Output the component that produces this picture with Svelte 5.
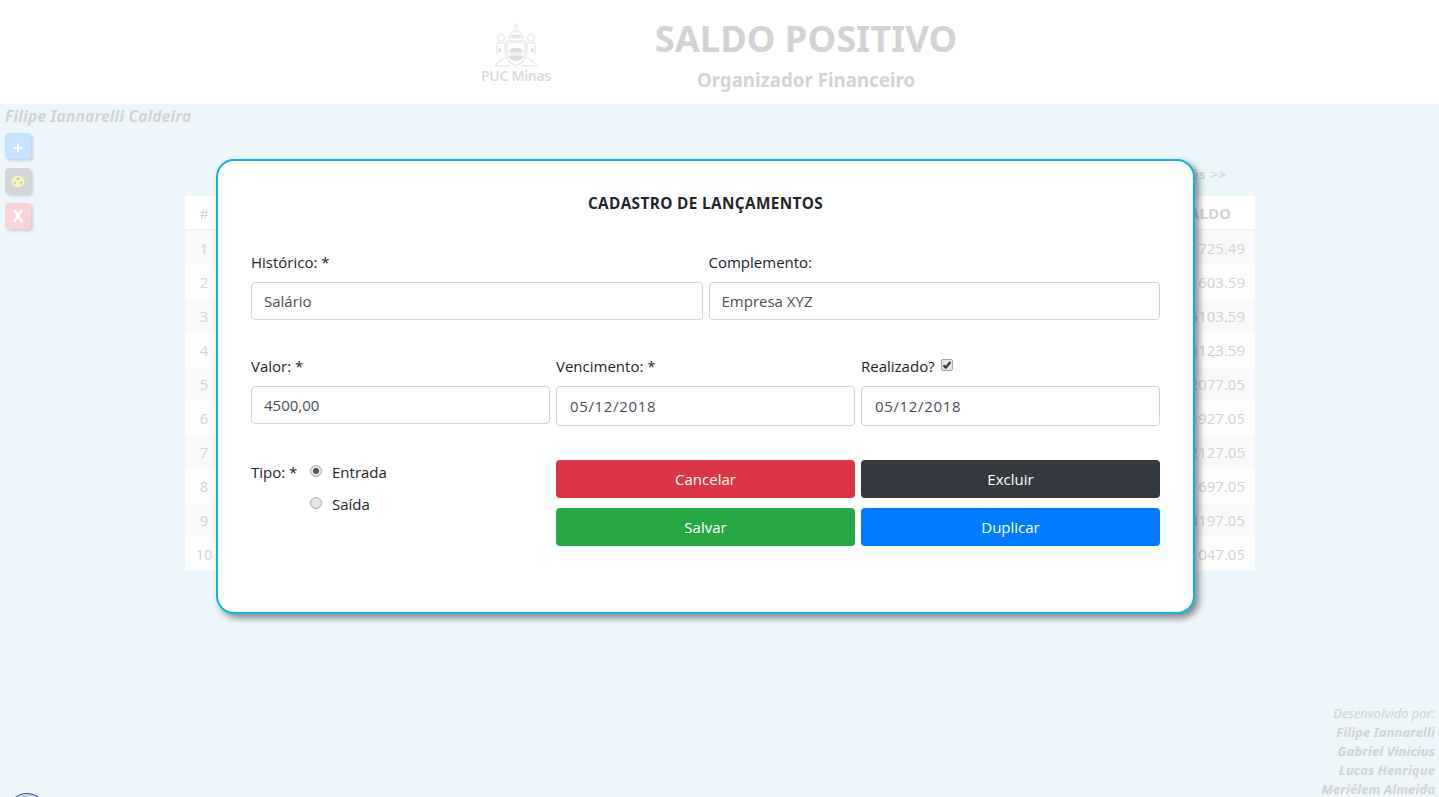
<script lang="ts">
  const balances = ['1725.49', '1603.59', '6103.59', '6123.59', '2077.05', '1927.05', '2127.05', '1697.05', '3197.05', '1047.05'];
  const authors = ['Filipe Iannarelli', 'Gabriel Vinicius', 'Lucas Henrique', 'Meriélem Almeida'];
  let description = $state('Salário');
  let complement = $state('Empresa XYZ');
  let amount = $state('4500,00');
  let due = $state('05/12/2018');
  let paid = $state('05/12/2018');
  let done = $state(true);
  let kind = $state('in');
</script>

<div class="page">
  <header>
    <div class="logo">
      <svg width="46" height="45" viewBox="0 0 46 45" fill="none" stroke="#efefef" stroke-width="2">
        <path d="M23 0v7M20.5 3h5M16 15c0-9 14-9 14 0zM14 18h18M18 10l5-3 5 3" />
        <path d="M18 13h10" stroke="#e2e2e2" stroke-width="2.5" />
        <circle cx="8" cy="15" r="3.5" /><circle cx="38" cy="15" r="3.5" />
        <path d="M3 20h12M31 20h12M4 22v9M12 20v9M34 20v9M42 22v9M12 30c3 3 2 5-2 6-5 2-6 6-8 7h15M34 30c-3 3-2 5 2 6 5 2 6 6 8 7H29" />
        <path d="M14 19v15c0 5 5 6 9 9 4-3 9-4 9-9V19z" />
        <path d="M16 29c2-5 12-5 14 0zM16 33c2 6 12 6 14 0zM18 31h10" fill="#dedede" stroke="#dedede" stroke-width="1" />
        <path d="m6 25.500 2.500 2-2 1.500zM40 25.500l-2.500 2 2 1.500z" fill="#d9d9d9" stroke="#d9d9d9" stroke-width="1" />
      </svg>
      <span>PUC Minas</span>
    </div>
    <div class="titles">
      <h1>SALDO POSITIVO</h1>
      <h2>Organizador Financeiro</h2>
    </div>
  </header>

  <aside>
    <div class="user">Filipe Iannarelli Caldeira</div>
    <button class="tool add" aria-label="+"><svg width="26" height="26"><path d="M13 11v8M9 15h8" stroke="#fff" stroke-width="2" /></svg></button>
    <button class="tool view" aria-label="Ver"><svg width="26" height="26"><ellipse cx="13" cy="13.500" rx="6.500" ry="5.700" fill="#f8f6bd" /><path d="M11 10h4l-2 2.200zM8.500 13.500l2.500 1-1 2.500zM17.500 13.500l-2.500 1 1 2.500z" fill="#b4b4ac" /></svg></button>
    <button class="tool close">X</button>
  </aside>

  <main>
    <div class="next">Mês &gt;&gt;</div>
    <table>
      <thead><tr><th class="num">#</th><th class="total">SALDO</th></tr></thead>
      <tbody>
        {#each balances as balance, i}
          <tr><td class="num">{i + 1}</td><td class="total">{balance}</td></tr>
        {/each}
      </tbody>
    </table>
  </main>

  <footer>
    <div class="by">Desenvolvido por:</div>
    {#each authors as author}<div>{author}</div>{/each}
  </footer>
  <div class="bubble"></div>

  <form class="modal">
    <h3>CADASTRO DE LANÇAMENTOS</h3>
    <div class="row two">
      <label><span class="caption">Histórico: *</span><input bind:value={description} /></label>
      <label><span class="caption">Complemento:</span><input bind:value={complement} /></label>
    </div>
    <div class="row three">
      <label><span class="caption">Valor: *</span><input bind:value={amount} /></label>
      <label><span class="caption">Vencimento: *</span><input class="date" bind:value={due} /></label>
      <div>
        <label class="caption done">Realizado?
          <input type="checkbox" bind:checked={done} />
          <span class="check">{#if done}<svg width="10" height="10"><path d="M1.5 5.2 3.8 7.6 8.4 2" fill="none" stroke="#333" stroke-width="2.2" /></svg>{/if}</span>
        </label>
        <input class="date" bind:value={paid} />
      </div>
    </div>
    <div class="row three last">
      <div class="kind">
        <span class="tipo">Tipo: *</span>
        <div class="options">
          <label><input type="radio" value="in" bind:group={kind} /><span class="dot" class:on={kind === 'in'}></span>Entrada</label>
          <label><input type="radio" value="out" bind:group={kind} /><span class="dot" class:on={kind === 'out'}></span>Saída</label>
        </div>
      </div>
      <div class="actions">
        <button type="button" class="red">Cancelar</button>
        <button type="button" class="green">Salvar</button>
      </div>
      <div class="actions">
        <button type="button" class="dark">Excluir</button>
        <button type="button" class="blue">Duplicar</button>
      </div>
    </div>
  </form>
</div>

<style>
  :global(body) { margin: 0; overflow: hidden; }
  * { box-sizing: border-box; }
  .page { position: relative; height: 797px; overflow: hidden; background: #edf6fa; color: #d3d3d5; font-family: "Noto Sans", sans-serif; font-size: 15px; }
  header { height: 104px; background: #fff; display: flex; padding-left: 476px; }
  .logo { width: 80px; padding-top: 23px; display: flex; flex-direction: column; align-items: center; }
  .logo span { font: 600 14px/16px "Noto Sans", sans-serif; letter-spacing: -0.3px; color: #dcdcdc; white-space: nowrap; }
  .titles { width: 500px; text-align: center; white-space: nowrap; }
  h1 { margin: 14px 0 0; font-size: 36.3px; line-height: 48px; font-weight: 700; }
  h2 { margin: 6px 0 0; font-size: 18.7px; line-height: 24px; font-weight: 700; }
  aside { width: 210px; height: 130px; padding: 1px 0 0 5px; display: flex; flex-direction: column; align-items: flex-start; }
  .user { flex: none; height: 28px; line-height: 23px; font-size: 15.5px; font-weight: 700; font-style: italic; letter-spacing: .2px; white-space: nowrap; }
  .tool { flex: none; width: 26px; height: 26px; margin-bottom: 9px; padding: 0; border: 0; border-radius: 4px; box-shadow: 2px 2px 3px #c9d1d5; color: #fff; font: 700 16px/26px "Noto Sans", sans-serif; }
  .tool svg { display: block; }
  .add { background: #c8e3fd; }
  .view { background: #d3d5d8; }
  .close { background: #f8d4d9; }
  main { width: 1070px; margin: -68px 0 0 185px; }
  .next { height: 30px; padding-right: 28px; text-align: right; font-size: 13px; line-height: 17px; font-weight: 600; letter-spacing: .8px; }
  table { width: 100%; border-collapse: collapse; font-family: "Open Sans", sans-serif; }
  th, td { height: 34px; padding: 0; font-weight: 400; }
  thead tr { height: 35px; background: #fff; }
  th { height: 35px; padding-bottom: 2px; box-shadow: inset 0 -2px #f3f6f8; }
  tbody tr { background: #fcfdfd; }
  tbody tr:nth-child(odd) { background: #f7f9fa; }
  .num { width: 38px; text-align: center; }
  .total { text-align: right; padding-right: 10px; }
  th.total { padding-right: 24px; font-weight: 700; }
  footer { position: absolute; right: 4px; top: 704px; text-align: right; font-size: 13px; line-height: 19px; font-weight: 700; font-style: italic; letter-spacing: .1px; white-space: nowrap; }
  .by { font-weight: 400; letter-spacing: -.05px; }
  .bubble { position: absolute; left: 7px; top: 793px; width: 40px; height: 40px; border: 1px solid #34577f; border-radius: 50%; background: #c3d6eb; }
  .modal { position: absolute; left: 216px; top: 159px; width: 979px; height: 455px; padding: 29px 33px; border: 2px solid #14b2e6; border-radius: 18px; background: #fff; box-shadow: 4px 4px 7px rgba(0, 0, 0, .45); color: #212529; font-family: "Open Sans", sans-serif; font-size: 15px; }
  h3 { margin: 0 0 37px; text-align: center; font-size: 15.3px; line-height: 26px; font-weight: 700; letter-spacing: .38px; }
  .row { display: grid; column-gap: 6px; }
  .two { grid-template-columns: 1fr 1fr; margin-bottom: 37px; }
  .three { grid-template-columns: repeat(3, 1fr); }
  .last { margin-top: 34px; }
  .caption { display: block; height: 29px; line-height: 18px; white-space: nowrap; }
  label { display: block; }
  input:not([type]) { display: block; width: 100%; height: 38px; padding: 0 12px; border: 1px solid #ced4da; border-radius: 4px; color: #495057; font: 15px "Open Sans", sans-serif; outline: 0; }
  input.date:not([type]) { height: 40px; padding-left: 13px; letter-spacing: .65px; }
  input[type] { position: absolute; opacity: 0; width: 0; height: 0; margin: 0; }
  .done { display: flex; gap: 6px; }
  .check { width: 12px; height: 12px; margin-top: 2px; border: 1px solid #a5a5a5; border-radius: 2px; background: #e5e5e5; }
  .check svg { display: block; }
  .kind { display: flex; }
  .tipo { width: 59px; line-height: 24px; }
  .options label { height: 32px; line-height: 24px; display: flex; }
  .dot { width: 12px; height: 12px; margin: 5px 10px 0 0; border: 1px solid #aaa; border-radius: 50%; background: #e6e6e6; }
  .dot.on { background: radial-gradient(circle, #555 0 2.7px, #e6e6e6 3.4px); }
  .actions { display: grid; gap: 10px; }
  .actions button { height: 38px; padding: 0; border: 0; border-radius: 4px; color: #fff; font: 15px "Open Sans", sans-serif; }
  .red { background: #dc3545; }
  .green { background: #28a745; }
  .dark { background: #343a40; }
  .blue { background: #007bff; }
</style>
